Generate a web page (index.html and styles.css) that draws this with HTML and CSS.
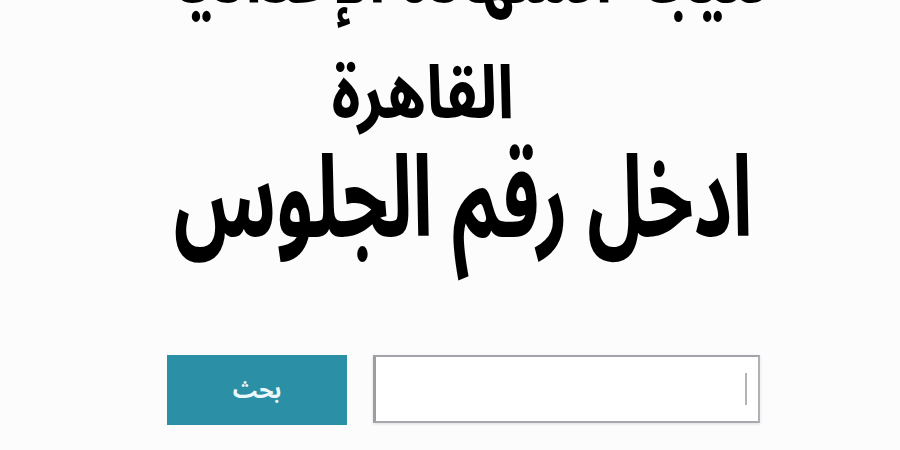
FILE: index.html
```html
<!DOCTYPE html>
<html lang="ar" dir="rtl">
<head>
<meta charset="utf-8">
<link rel="stylesheet" href="styles.css">
</head>
<body>
<main class="page">
  <h1 class="title"><span class="squeeze t">نتيجة الشهادة الإعدادية</span></h1>
  <h2 class="city"><span class="squeeze c">القاهرة</span></h2>
  <h3 class="prompt"><span class="squeeze p">ادخل رقم الجلوس</span></h3>
  <form class="search">
    <div class="field"><span class="caret"></span></div>
    <button type="button" class="btn">بحث</button>
  </form>
</main>
</body>
</html>
```
FILE: styles.css
```css
html, body {
  margin: 0;
  padding: 0;
  background: #fcfcfc;
  width: 900px;
  height: 450px;
  overflow: hidden;
}
.page {
  width: 593px;
  margin-right: 140px;
  display: flex;
  flex-direction: column;
  font-family: "Noto Sans Arabic", sans-serif;
  color: #000;
}
.squeeze {
  display: block;
  flex: none;
  white-space: nowrap;
  transform-origin: center center;
}
.title, .city, .prompt {
  display: flex;
  justify-content: center;
  margin: 0;
  font-weight: bold;
}
.title {
  margin-top: -82px;
  height: 120px;
  font-size: 80px;
  line-height: 120px;
}
.t { transform: scaleX(0.76); }
.city {
  height: 90px;
  padding-top: 12px;
  padding-right: 82px;
  font-size: 74px;
  line-height: 90px;
}
.c { transform: scaleX(0.84); }
.prompt {
  height: 130px;
  margin-top: -5px;
  font-size: 113px;
  line-height: 130px;
}
.p { transform: scaleX(0.662); }
.search {
  margin-top: 90px;
  display: flex;
  flex-direction: row;
  gap: 26px;
  align-items: flex-start;
}
.field {
  width: 387px;
  height: 68px;
  border-style: solid;
  border-color: #a3a3aa #b0b0b6 #a8a8ae #9c9ca2;
  border-width: 2px 2px 2px 3px;
  background: #fff;
  box-shadow: 0 1px 3px rgba(0,0,0,0.12);
  display: flex;
  align-items: center;
  padding-right: 11px;
  box-sizing: border-box;
}
.caret {
  width: 2px;
  height: 32px;
  background: #b4b4b8;
}
.btn {
  width: 180px;
  height: 70px;
  border: none;
  background: #2b8fa6;
  color: #eaf8fb;
  font-family: "Noto Sans Arabic", sans-serif;
  font-weight: bold;
  font-size: 23px;
  padding: 0;
}
```
